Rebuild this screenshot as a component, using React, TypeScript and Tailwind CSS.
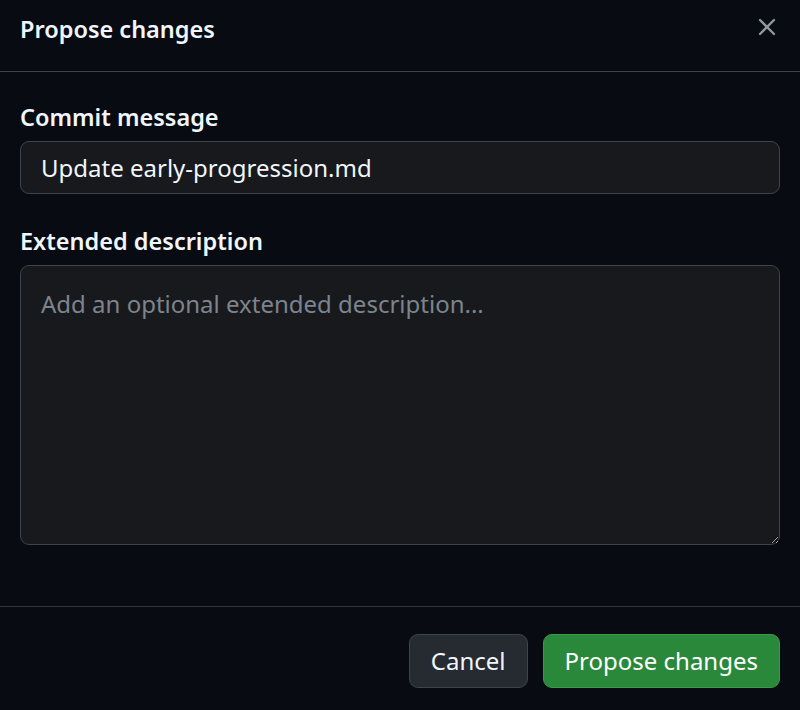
import { X } from 'lucide-react';

function App() {
  return (
    <div
      className="w-[800px] h-[710px] bg-[#080b11] text-[#f0f6fc] flex flex-col [color-scheme:dark]"
      style={{ fontFamily: '"Noto Sans", "Open Sans", sans-serif' }}
    >
      <div className="h-[72px] border-b border-[#3d444d] flex items-start justify-between px-5 pt-[13px]">
        <h2 className="text-[23.5px] leading-[32px] font-semibold">Propose changes</h2>
        <button className="-mr-[1px] w-[28px] h-[28px] flex items-center justify-center text-[#9198a1]">
          <X size={28} strokeWidth={2} />
        </button>
      </div>

      <div className="flex-1 px-5 pt-[30px] border-b border-[#30363d]">
        <label className="block text-[23.5px] leading-[30px] font-semibold">Commit message</label>
        <input
          className="mt-[9px] w-full h-[53px] rounded-[9px] border border-[#3d444d] bg-[#17191d] px-5 text-[24px] text-[#f0f6fc] outline-none"
          defaultValue="Update early-progression.md"
        />

        <label className="block mt-[32px] text-[23.5px] leading-[30px] font-semibold">
          Extended description
        </label>
        <textarea
          className="mt-[9px] block w-full h-[280px] rounded-[9px] border border-[#3d444d] bg-[#17191d] px-5 pt-[21px] text-[24px] leading-[34px] text-[#f0f6fc] placeholder:text-[#7d848e] outline-none resize-y"
          placeholder="Add an optional extended description..."
        />
      </div>

      <div className="h-[103px] flex items-start justify-end gap-[15px] px-5 pt-[27px]">
        <button className="h-[54px] px-[21px] rounded-[9px] border border-[#3d444d] bg-[#262a31] text-[24px] font-normal text-[#f0f6fc]">
          Cancel
        </button>
        <button className="h-[54px] px-[21px] rounded-[9px] border border-[#3a9a4b] bg-[#29883a] text-[24px] font-normal text-white">
          Propose changes
        </button>
      </div>
    </div>
  );
}

export default App;
